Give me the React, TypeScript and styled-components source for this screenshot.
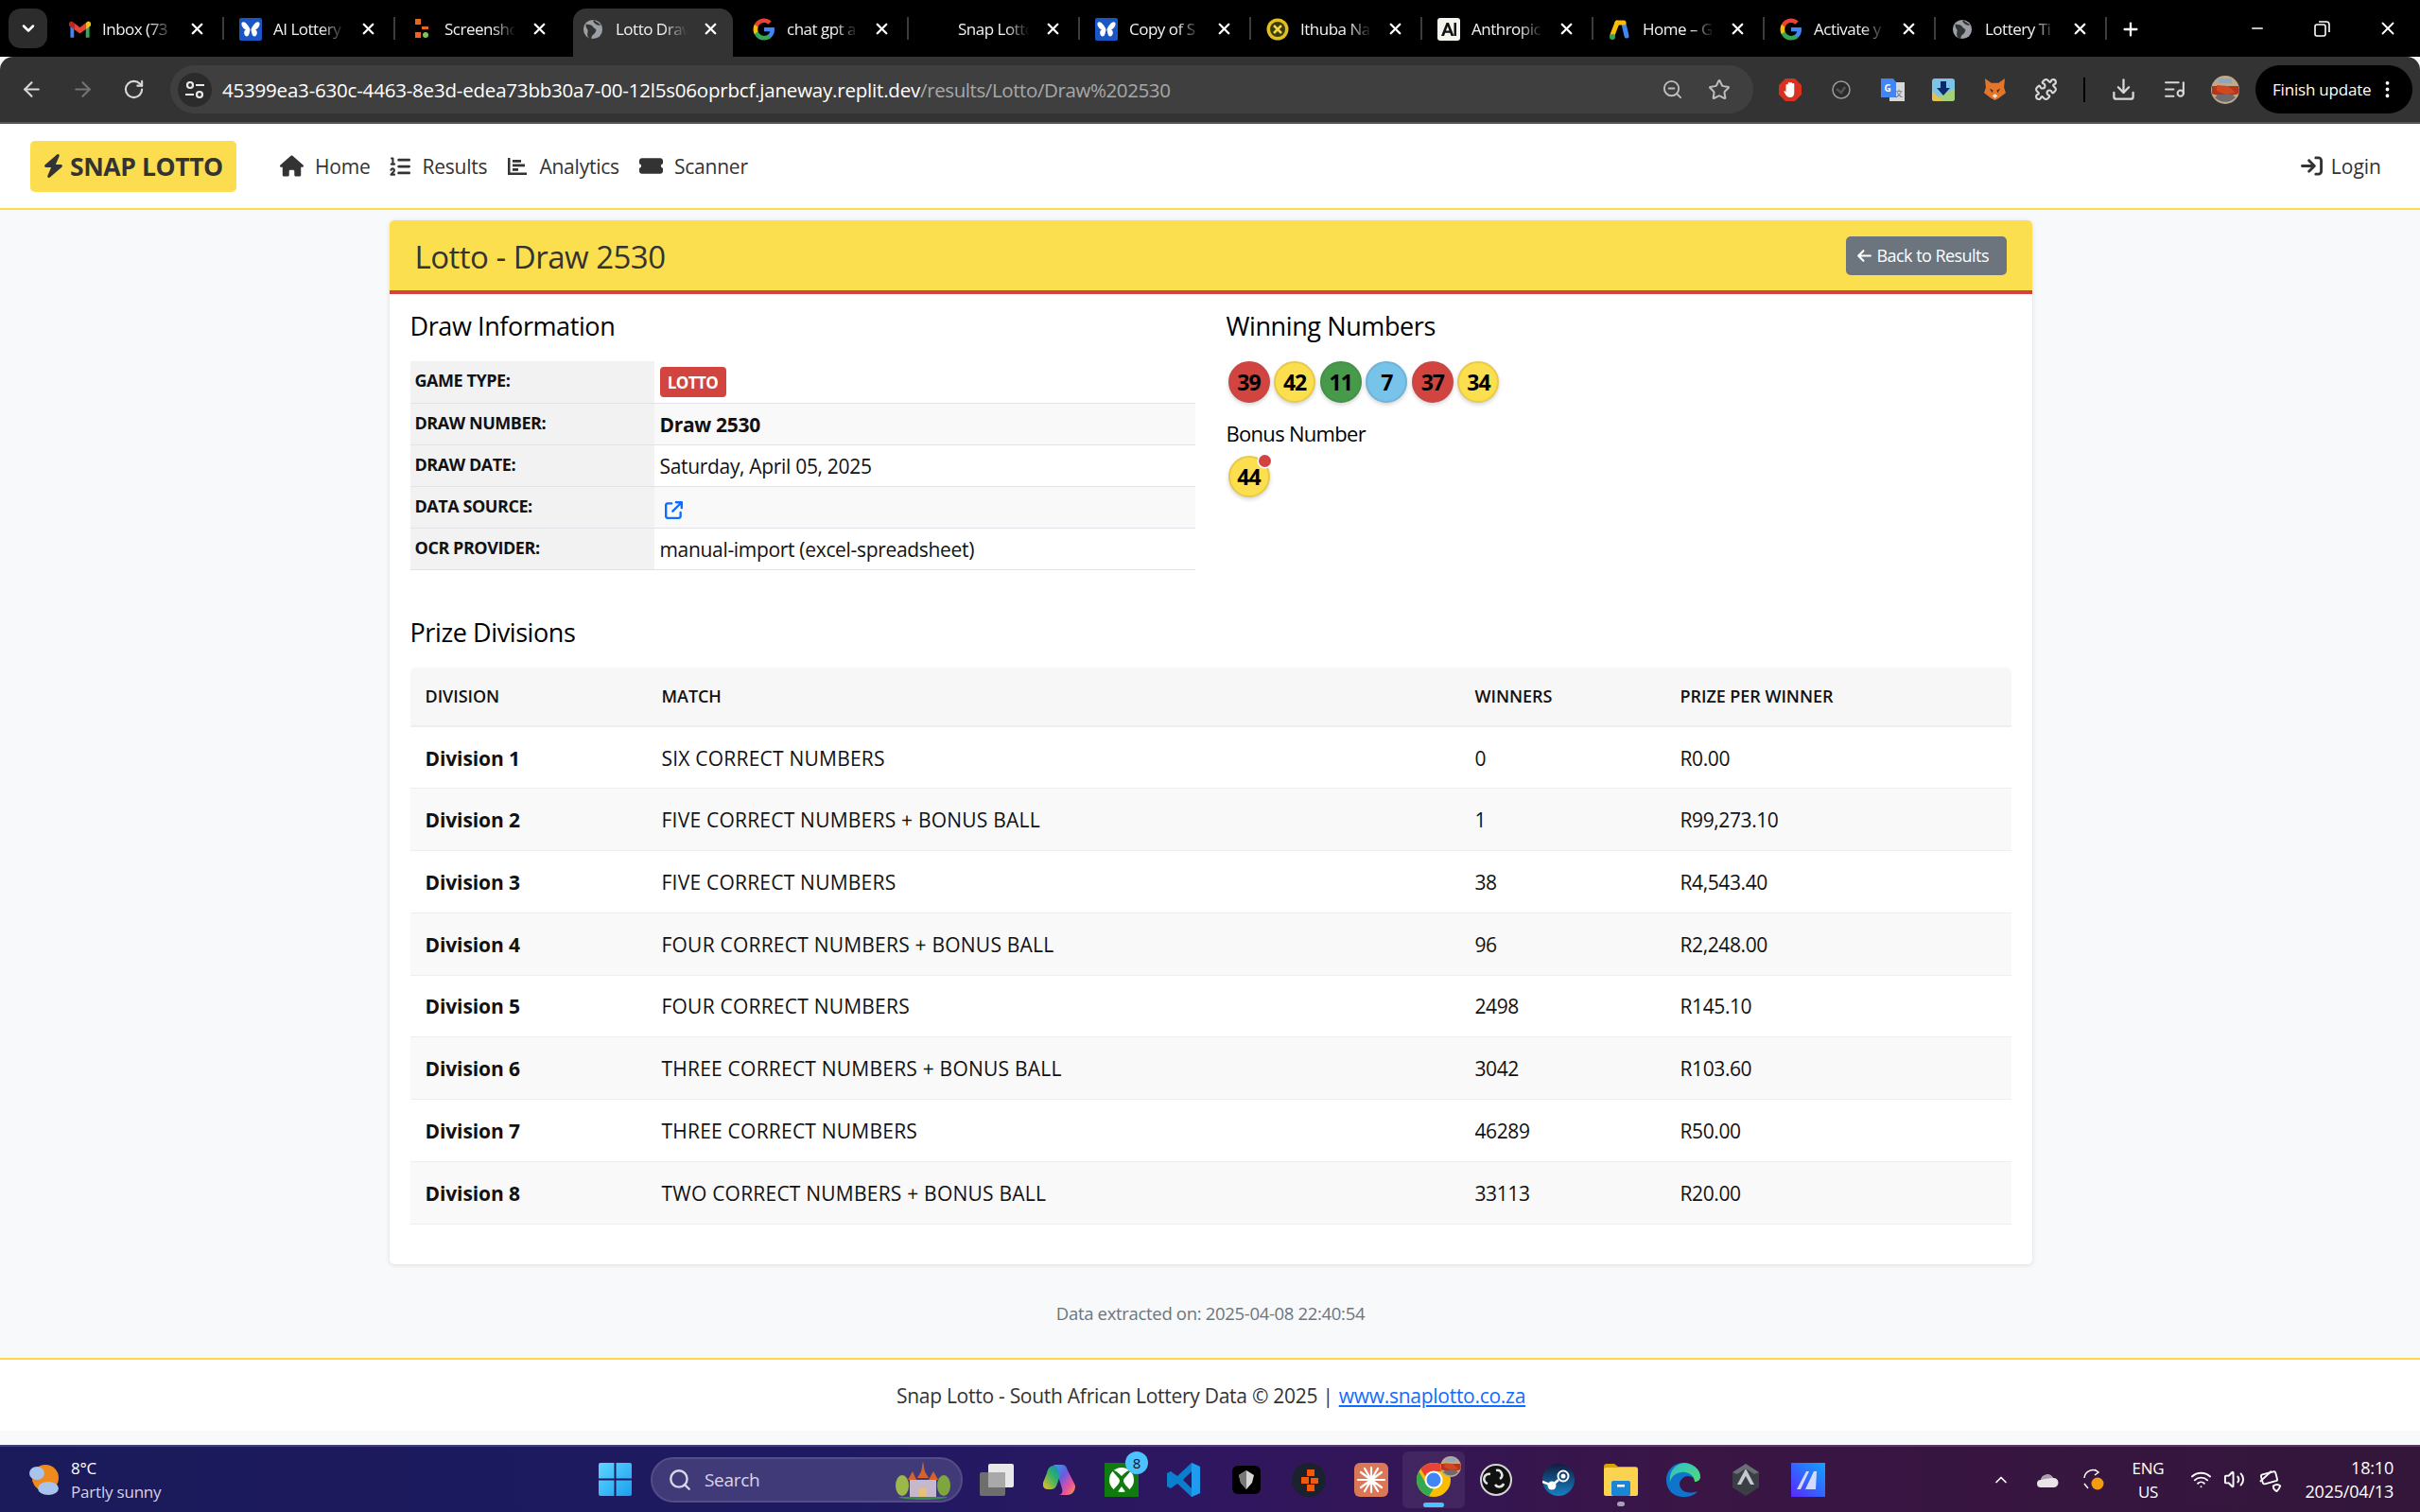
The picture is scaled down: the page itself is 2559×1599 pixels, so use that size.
import React from "react";
import styled, { createGlobalStyle, css } from "styled-components";
import { FaArrowLeft, FaArrowRightToBracket, FaArrowUpRightFromSquare, FaBolt, FaHouse, FaListOl, FaTicketSimple } from "react-icons/fa6";
import { ArrowLeft, ArrowRight, ChevronDown, Download, EllipsisVertical, ListMusic, Minus, Plus, Puzzle, RotateCw, Search, Star, X, ZoomOut, ChevronUp, Wifi, Volume2 } from "lucide-react";

const Global = createGlobalStyle`
  html, body { margin: 0; padding: 0; background: #f8f9fa; }
  body { font-family: "Open Sans", "Noto Sans", sans-serif; color: #333; }
  * { box-sizing: border-box; }
`;

const Screen = styled.div`
  width: 2559px; height: 1599px; display: flex; flex-direction: column; overflow: hidden; background: #f8f9fa;
`;

/* browser chrome */
const TabStrip = styled.div`
  height: 60px; background: #000; display: flex; align-items: flex-end; position: relative; padding-left: 9px; flex: none;
`;
const TabListButton = styled.div`
  width: 41px; height: 42px; margin: 0 6px 9px 0; border-radius: 13px; background: #2c2c2c; color: #fff; display: flex; align-items: center; justify-content: center; flex: none;
`;
const Tab = styled.div<{ $active?: boolean; $sep?: boolean }>`
  width: 181px; height: 51px; flex: none; display: flex; position: relative; align-items: center; color: #fff; padding-bottom: 8px;
  ${p => p.$sep && css`
    &::after { content: ""; position: absolute; right: 0; top: 9px; width: 2px; height: 24px; background: #3c3c3c; }
  `}
  ${p => p.$active && css`
    &::before { content: ""; position: absolute; left: 7px; right: 5px; top: 0; bottom: 0; background: #333; border-radius: 14px 14px 0 0; }
  `}
`;
const FavSlot = styled.div`
  width: 24px; height: 24px; margin-left: 16px; flex: none; position: relative; display: flex; align-items: center; justify-content: center;
`;
const TabTitle = styled.div`
  position: relative; margin-left: 12px; width: 82px; overflow: hidden; white-space: nowrap; font-size: 17px; letter-spacing: -0.5px; color: #f2f2f2;
  -webkit-mask-image: linear-gradient(90deg, #000 62%, transparent 92%); mask-image: linear-gradient(90deg, #000 62%, transparent 92%);
`;
const TabClose = styled.div`
  position: relative; margin-left: 9px; display: flex; color: #fff;
`;
const NewTab = styled.div`
  width: 50px; height: 51px; display: flex; align-items: center; justify-content: center; color: #fff; padding-bottom: 8px; flex: none;
`;
const WindowControls = styled.div`
  margin-left: auto; display: flex; align-self: stretch; color: #fff;
`;
const WindowButton = styled.div`
  width: 69px; display: flex; align-items: center; justify-content: center;
`;

const Toolbar = styled.div`
  height: 69px; background: #333; border-radius: 14px 14px 0 0; display: flex; align-items: center; padding-left: 6px; flex: none;
`;
const ToolbarEdge = styled.div`height: 2px; background: #555; flex: none;`;
const NavButton = styled.div<{ $dim?: boolean }>`
  width: 54px; height: 51px; display: flex; align-items: center; justify-content: center; color: ${p => (p.$dim ? "#757575" : "#d8d8d8")}; flex: none;
`;
const Omnibox = styled.div`
  margin-left: 12px; width: 1674px; height: 51px; border-radius: 26px; background: #3f3f3f; display: flex; align-items: center; padding: 0 24px 0 8px; flex: none;
`;
const SiteChip = styled.div`
  width: 36px; height: 36px; border-radius: 50%; background: #2b2b2b; display: flex; align-items: center; justify-content: center; flex: none; margin-right: 11px;
`;
const UrlHost = styled.span`color: #fff; font-size: 20.5px; letter-spacing: -0.2px; white-space: nowrap;`;
const UrlPath = styled.span`color: #a8a8a8; font-size: 20.5px; letter-spacing: -0.4px; white-space: nowrap;`;
const OmniActions = styled.div`margin-left: auto; display: flex; gap: 26px; color: #bdbdbd; align-items: center;`;
const ExtSlot = styled.div`
  width: 54px; height: 51px; display: flex; align-items: center; justify-content: center; flex: none; color: #d8d8d8;
`;
const ExtGroup = styled.div`display: flex; margin-left: 12px; flex: none;`;
const ToolbarSep = styled.div`width: 2px; height: 26px; background: #000; margin: 0 13px; flex: none;`;
const UpdatePill = styled.div`
  margin-left: 5px; width: 166px; height: 51px; border-radius: 26px; background: #000; color: #fff; display: flex; align-items: center; padding-left: 18px; font-size: 17px; letter-spacing: -0.2px; white-space: nowrap; flex: none;
  svg { margin-left: 6px; }
`;

/* navbar */
const Navbar = styled.nav`
  height: 91px; background: #fff; border-bottom: 2px solid #fcdc4d; display: flex; align-items: center; padding: 0 41px 0 32px; flex: none;
`;
const Brand = styled.div`
  width: 218px; height: 54px; background: #fcdd50; border-radius: 5px; display: flex; align-items: center; padding-left: 12px; gap: 5px;
  font-size: 26.5px; font-weight: 700; color: #333; letter-spacing: -0.4px; white-space: nowrap; flex: none;
`;
const NavLinks = styled.div`display: flex; margin-left: 46px; gap: 21px;`;
const NavLink = styled.a`
  display: flex; align-items: center; gap: 12px; font-size: 21px; color: #333; letter-spacing: -0.22px; white-space: nowrap;
`;
const LoginLink = styled(NavLink)`margin-left: auto; gap: 9px; letter-spacing: 0;`;

/* content */
const Main = styled.main`
  flex: 1; display: flex; flex-direction: column; align-items: center; padding: 11px 0 0 1px;
`;
const Card = styled.section`
  width: 1737px; height: 1104px; background: #fff; border-radius: 5px; box-shadow: 0 1px 5px rgba(0,0,0,.12); flex: none; overflow: hidden;
`;
const CardHeader = styled.header`
  height: 78px; background: #fcdf4f; border-bottom: 4px solid #d1443f; display: flex; align-items: center; justify-content: space-between; padding: 0 27px;
`;
const CardTitle = styled.h1`
  margin: 2px 0 0; font-size: 33px; font-weight: 500; color: #333; letter-spacing: -0.5px;
`;
const BackButton = styled.a`
  width: 170px; height: 41px; background: #6c757d; border-radius: 5px; color: #fff; display: flex; align-items: center; padding-left: 11px; gap: 5px; font-size: 18px; letter-spacing: -0.55px; white-space: nowrap;
`;
const CardBody = styled.div`padding: 18px 22px 0;`;
const InfoRow = styled.div`display: flex; gap: 33px; height: 324px;`;
const InfoColumn = styled.div`width: 830px; flex: none;`;
const SectionTitle = styled.h2`
  margin: 0 0 21px; font-size: 27px; line-height: 32px; font-weight: 500; color: #000; letter-spacing: -0.4px;
`;
const InfoTable = styled.table`
  width: 830px; border-collapse: collapse; table-layout: fixed;
`;
const InfoRowEl = styled.tr<{ $alt?: boolean }>`
  height: 44px; border-bottom: 1.5px solid #e2e2e8;
  td { background: ${p => (p.$alt ? "#f9f9f9" : "#fff")}; }
`;
const InfoHead = styled.th`
  width: 258px; background: #f2f2f2; text-align: left; vertical-align: top; padding: 8px 0 0 5px; font-size: 18px; line-height: 25px; font-weight: 700; text-transform: uppercase; color: #111; letter-spacing: -0.45px;
`;
const InfoValue = styled.td<{ $bold?: boolean }>`
  padding: 2px 0 0 6px; font-size: 21px; color: #111; letter-spacing: -0.32px; font-weight: ${p => (p.$bold ? 700 : 400)}; vertical-align: middle;
`;
const Badge = styled.span`
  display: inline-block; width: 70px; height: 32px; line-height: 33px; text-align: center; background: #d1443f; border-radius: 4px; color: #fff; font-size: 17px; font-weight: 700; letter-spacing: -0.6px; vertical-align: middle; margin-top: -3px;
`;
const SourceLink = styled.a`color: #0d6efd; display: inline-flex; margin-left: 5px; vertical-align: middle;`;
const BallRow = styled.div`display: flex; gap: 4.6px; margin-left: 2px;`;
const ballColors = {
  red: ["#d1443f", "#c84844"],
  yellow: ["#fcdf4f", "#e8c94a"],
  green: ["#479a4a", "#439047"],
  blue: ["#78c3e9", "#6fb3d6"],
};
const Ball = styled.div<{ $c: keyof typeof ballColors }>`
  width: 44px; height: 44px; border-radius: 50%; background: ${p => ballColors[p.$c][0]}; border: 2px solid ${p => ballColors[p.$c][1]};
  box-shadow: 0 2px 4px rgba(0,0,0,.18); display: flex; align-items: center; justify-content: center; font-size: 23px; font-weight: 700; color: #000; letter-spacing: -1px; position: relative;
`;
const BonusDot = styled.span`
  position: absolute; top: -3px; right: -3px; width: 13px; height: 13px; border-radius: 50%; background: #d1443f; box-shadow: 0 0 0 1.5px #fff;
`;
const BonusTitle = styled.h3`
  margin: 19px 0 10px; font-size: 22px; line-height: 27px; font-weight: 500; color: #000; letter-spacing: -0.7px;
`;
const PrizeTitle = styled(SectionTitle)`margin-bottom: 21px;`;
const PrizeTable = styled.table`
  width: 1693px; border-collapse: collapse; table-layout: fixed;
`;
const PrizeHeadRow = styled.tr`
  height: 62px; background: #f7f7f7; border-bottom: 2px solid #eee;
  th:first-child { border-top-left-radius: 6px; }
  th:last-child { border-top-right-radius: 6px; }
`;
const PrizeHead = styled.th<{ $w: number }>`
  width: ${p => p.$w}px; text-align: left; padding: 0 0 2px 16px; font-size: 18px; font-weight: 600; color: #111; text-transform: uppercase; letter-spacing: -0.05px;
`;
const PrizeRow = styled.tr`
  height: 65.75px; border-bottom: 1px solid #eee;
  &:nth-child(even) { background: #f9f9f9; }
`;
const PrizeCell = styled.td<{ $bold?: boolean; $caps?: boolean }>`
  padding: 1px 0 0 16px; font-size: 21px; color: #111; font-weight: ${p => (p.$bold ? 700 : 400)};
  letter-spacing: ${p => (p.$caps ? "0.22px" : p.$bold ? "-0.1px" : "-0.4px")};
`;
const Extracted = styled.div`
  flex: 1; display: flex; align-items: center; justify-content: center; font-size: 18.5px; color: #6c757d; letter-spacing: -0.32px; padding-top: 3px;
`;
const Footer = styled.footer`
  height: 77px; background: #fff; border-top: 2px solid #fcd94a; display: flex; align-items: center; justify-content: center; font-size: 21px; color: #333; letter-spacing: -0.27px; flex: none; margin-bottom: 15px; padding-left: 2px;
  a { color: #0d6efd; text-decoration: underline; margin-left: 6px; }
`;

/* taskbar */
const Taskbar = styled.div`
  height: 71px; flex: none; border-top: 2px solid rgba(255,255,255,.16); background: linear-gradient(90deg, #1b1a5a 0%, #1e1a62 35%, #2f1660 50%, #3a1545 70%, #33163a 100%);
  display: flex; align-items: center; padding: 0 28px 0 30px; color: #fff;
`;
const Weather = styled.div`width: 587px; display: flex; align-items: center; gap: 12px; flex: none;`;
const WeatherText = styled.div`
  font-size: 17px; line-height: 25px; letter-spacing: -0.2px; white-space: nowrap; color: #fff; span { color: #d5d3e6; display: block; }
`;
const TaskGroup = styled.div`display: flex; align-items: center; flex: none;`;
const TaskSlot = styled.div<{ $active?: boolean }>`
  width: 66px; height: 60px; display: flex; align-items: center; justify-content: center; position: relative; border-radius: 6px; flex: none;
  ${p => p.$active && css`
    background: rgba(255,255,255,.07);
    &::after { content: ""; position: absolute; bottom: 1px; left: 22px; width: 22px; height: 5px; border-radius: 3px; background: #4cc2ff; }
  `}
`;
const RunDot = styled.span`position: absolute; bottom: 2px; left: 29px; width: 8px; height: 5px; border-radius: 3px; background: #a99fb8;`;
const SearchBox = styled.div`
  width: 330px; height: 48px; margin: 0 3px 0 5px; border-radius: 24px; background: #413a78; border: 2px solid #544c86; display: flex; align-items: center; padding-left: 16px; gap: 13px; font-size: 19px; color: #d8d6ea; letter-spacing: -0.3px; position: relative; flex: none;
`;
const SearchCastle = styled.div`position: absolute; right: 10px; top: 2px; display: flex;`;
const XboxBadge = styled.span`
  position: absolute; top: 0; right: 5px; width: 24px; height: 24px; border-radius: 50%; background: #4cc2ff; color: #111; font-size: 15px; display: flex; align-items: center; justify-content: center;
`;
const ChromeBadge = styled.span`position: absolute; top: 5px; right: 4px; display: flex;`;
const Tray = styled.div`margin-left: auto; display: flex; align-items: center; flex: none; color: #fff;`;
const TrayIcon = styled.div<{ $w: number }>`width: ${p => p.$w}px; display: flex; align-items: center; justify-content: center; flex: none;`;
const Lang = styled.div`width: 50px; font-size: 17px; line-height: 25px; text-align: center; letter-spacing: -0.3px; margin: 0 18px 0 8px;`;
const Clock = styled.div`margin-left: 19px; font-size: 18px; line-height: 25px; text-align: right; letter-spacing: -0.2px; white-space: nowrap;`;

/* drawings */
const GlobeFav = () => (
  <svg width="22" height="22" viewBox="0 0 24 24"><circle cx="12" cy="12" r="11" fill="#9aa0a6" /><path d="M4 6c4 1 6 0 8 3s5 2 3 6-4 2-5 8c-4-1-5-4-4-8S3 11 4 6zM13 1c2 2 5 3 8 6-3 1-5 0-7-2s-2-3-1-4z" fill="#333" /></svg>
);
const ButterflyFav = () => (
  <svg width="24" height="24" viewBox="0 0 24 24"><rect width="24" height="24" rx="2" fill="#1a56c4" /><path d="M11.500 12C9 7 6 3.500 3.500 4.500S3 11 7 12.500C4 13.500 5 19 7.500 19.500S11 16 11.500 12zM12.500 12C15 7 18 3.500 20.500 4.500S21 11 17 12.500c3 1 2 6.500-.5 7S13 16 12.500 12z" fill="#fff" /></svg>
);
const GoogleFav = () => (
  <svg width="24" height="24" viewBox="0 0 24 24">
    <path d="M23 12.300c0-.8-.1-1.600-.2-2.300H12v4.300h6.200c-.3 1.400-1.100 2.600-2.300 3.400v2.900h3.700c2.200-2 3.400-5 3.400-8.300z" fill="#4285f4" />
    <path d="M12 23.500c3.100 0 5.700-1 7.600-2.800l-3.700-2.900c-1 .7-2.300 1.100-3.900 1.100-3 0-5.500-2-6.400-4.700H1.800v3A11.500 11.500 0 0 0 12 23.500z" fill="#34a853" />
    <path d="M5.600 14.200a6.900 6.900 0 0 1 0-4.400v-3H1.800a11.500 11.500 0 0 0 0 10.400l3.800-3z" fill="#fbbc05" />
    <path d="M12 5.100c1.700 0 3.200.6 4.400 1.700l3.300-3.300A11.500 11.500 0 0 0 1.800 6.800l3.800 3C6.500 7.100 9 5.100 12 5.100z" fill="#ea4335" />
  </svg>
);
const favicons: Record<string, React.ReactNode> = {
  gmail: (
    <svg width="23" height="18" viewBox="0 0 24 18"><path d="M1.500 18V5l4 3v10z" fill="#4285f4" /><path d="M18.500 18V8l4-3v13z" fill="#34a853" /><path d="M18.500 2v7L12 13.800 5.500 9V2L12 7z" fill="#ea4335" /><path d="M0 2.500C0 .5 2.500-.7 4 .6L5.500 2v7L0 5z" fill="#c5221f" /><path d="M24 2.500C24 .5 21.500-.7 20 .6L18.500 2v7L24 5z" fill="#fbbc04" /></svg>
  ),
  butterfly: <ButterflyFav />,
  blocks: (
    <svg width="16" height="24" viewBox="0 0 16 24"><rect x="1" y="1" width="6" height="6" fill="#e8661f" /><rect x="8" y="9" width="7" height="3" fill="#e8661f" /><rect x="1" y="15" width="6" height="6" fill="#e8661f" /><circle cx="12" cy="18" r="3" fill="#7ac74f" /></svg>
  ),
  globe: <GlobeFav />,
  google: <GoogleFav />,
  none: null,
  ithuba: (
    <svg width="24" height="24" viewBox="0 0 24 24"><circle cx="12" cy="12" r="11.500" fill="#e0c020" /><circle cx="12" cy="12" r="8" fill="#3a3a10" /><path d="M8 8l8 8M16 8l-8 8" stroke="#f0d840" strokeWidth="2.500" /></svg>
  ),
  anthropic: (
    <svg width="24" height="24" viewBox="0 0 24 24"><rect width="24" height="24" rx="3" fill="#f5f5f0" /><path d="M4 19 9.500 5h2.500l5.500 14h-3l-1.200-3.300H8.200L7 19zm5-5.500h3.500L10.800 8.700z" fill="#111" /><rect x="17.500" y="5" width="2.500" height="14" fill="#111" /></svg>
  ),
  ads: (
    <svg width="24" height="24" viewBox="0 0 24 24"><path d="M9 5 4 18" stroke="#fbbc04" strokeWidth="5" strokeLinecap="round" /><path d="M16 6 19 19" stroke="#4285f4" strokeWidth="5" strokeLinecap="round" /><path d="M9 5h7" stroke="#fbbc04" strokeWidth="5" strokeLinecap="round" /><circle cx="4" cy="20" r="3" fill="#34a853" /></svg>
  ),
};
const tabs = [
  ["gmail", "Inbox (73"], ["butterfly", "AI Lottery"], ["blocks", "Screensho"], ["globe", "Lotto Draw"], ["google", "chat gpt a"],
  ["none", "Snap Lotto"], ["butterfly", "Copy of S"], ["ithuba", "Ithuba Na"], ["anthropic", "Anthropic"], ["ads", "Home – G"],
  ["google", "Activate y"], ["globe", "Lottery Ti"],
] as const;

const TuneIcon = () => (
  <svg width="24" height="24" viewBox="0 0 24 24" fill="none" stroke="#e8e8e8" strokeWidth="2.200"><circle cx="7" cy="7" r="3" /><path d="M13 7h9M2 17h9" /><circle cx="17" cy="17" r="3" /></svg>
);
const ExtIcons = [
  <svg key="a" width="24" height="24" viewBox="0 0 24 24"><path d="M7 0h10l7 7v10l-7 7H7l-7-7V7z" fill="#d9301f" /><path d="M7.500 16V7a1.100 1.100 0 0 1 2.200 0V5a1.100 1.100 0 0 1 2.200 0v0a1.100 1.100 0 0 1 2.200 0v1a1.100 1.100 0 0 1 2.200 0v9c0 3-1.500 5-4.500 5-2.500 0-3.500-1.500-5-3.500l-1.500-3c1.500-1 2.500.5 2.200 2.500z" fill="#fff" /></svg>,
  <svg key="b" width="20" height="20" viewBox="0 0 20 20"><circle cx="10" cy="10" r="9" fill="#2b2b2b" stroke="#9a9a9a" strokeWidth="1.500" /><path d="M5 9l5 4 4-6" stroke="#555" strokeWidth="2.500" fill="none" /></svg>,
  <svg key="c" width="25" height="24" viewBox="0 0 25 24"><rect x="9" y="4" width="16" height="20" fill="#d8d8d8" /><path d="M0 0h13l3 4v16H0z" fill="#4285f4" /><text x="7" y="14" fontSize="10" fontFamily="Open Sans" fontWeight="700" fill="#fff" textAnchor="middle">G</text><text x="19" y="19" fontSize="8" fontFamily="Noto Sans CJK SC" fill="#666" textAnchor="middle">文</text></svg>,
  <svg key="d" width="24" height="24" viewBox="0 0 24 24"><rect width="24" height="24" rx="3" fill="#7cc3e8" /><path d="M0 22 24 11v10a3 3 0 0 1-3 3H3a3 3 0 0 1-3-3z" fill="#a6cf7a" /><path d="M0 13l11 11H3a3 3 0 0 1-3-3z" fill="#e7c04e" /><path d="M9 3h6v7h4l-7 8-7-8h4z" fill="#0b2a6b" /></svg>,
  <svg key="e" width="23" height="23" viewBox="0 0 24 24"><path d="M1 0l7 5h8l7-5-1 10 2 6-8 6-4 2-4-2-8-6 2-6z" fill="#e2762a" /><path d="M6 11l4 2-1 3zM18 11l-4 2 1 3z" fill="#5a2a10" /><path d="M9 19l3-2 3 2-3 3z" fill="#f3e0d0" /></svg>,
  <Puzzle key="f" size={25} strokeWidth={2} color="#d8d8d8" />,
];

const Avatar = ({ size = 30 }: { size?: number }) => (
  <svg width={size} height={size} viewBox="0 0 30 30">
    <circle cx="15" cy="15" r="15" fill="#bfa98a" />
    <path d="M1 11h28c1 4 1 6 0 8-6 3-23 3-28 0z" fill="#b5361f" />
    <path d="M6 10l12 1 8 7-10 2-10-4z" fill="#cf4a23" />
    <path d="M4 23a15 15 0 0 0 22 0l-4-3H8z" fill="#6d6a70" />
    <path d="M8 3h14v5H8z" fill="#8aa8c8" />
  </svg>
);

const WinLogo = () => (
  <svg width="35" height="35" viewBox="0 0 35 35"><defs><linearGradient id="wl" x1="0" y1="0" x2="1" y2="1"><stop offset="0" stopColor="#60d6ff" /><stop offset="1" stopColor="#1a9ff0" /></linearGradient></defs><path d="M0 2a2 2 0 0 1 2-2h14.500v16.500H0zM18.500 0H33a2 2 0 0 1 2 2v14.500H18.500zM0 18.500h16.500V35H2a2 2 0 0 1-2-2zM18.500 18.500H35V33a2 2 0 0 1-2 2H18.500z" fill="url(#wl)" /></svg>
);
const Castle = () => (
  <svg width="60" height="42" viewBox="0 0 60 42"><ellipse cx="8" cy="26" rx="7" ry="11" fill="#9db84a" /><ellipse cx="52" cy="26" rx="7" ry="11" fill="#7fa53f" /><path d="M30 0l2 12h-4z" fill="#b8654a" /><rect x="16" y="20" width="28" height="18" fill="#c5b8cc" /><path d="M14 20l5-9 4 9zM36 20l5-9 5 9zM24 18l6-10 6 10z" fill="#d9622c" /><rect x="26" y="28" width="8" height="10" fill="#e6c07a" /><path d="M4 38h52c-2 4-50 4-52 0z" fill="#3d8a4c" /></svg>
);
const TaskIcons: Record<string, React.ReactNode> = {
  view: (
    <svg width="36" height="34" viewBox="0 0 36 34"><rect x="0" y="9" width="27" height="25" rx="2" fill="#6e6e6e" /><rect x="9" y="0" width="27" height="25" rx="2" fill="#e8e8e8" /><rect x="9" y="9" width="18" height="16" fill="#a9a9a9" /></svg>
  ),
  copilot: (
    <svg width="34" height="32" viewBox="0 0 34 32"><defs><linearGradient id="co" x1="0" y1="0" x2="1" y2="1"><stop offset="0" stopColor="#2aa7e8" /><stop offset=".4" stopColor="#6a5ae0" /><stop offset=".7" stopColor="#e84fa0" /><stop offset="1" stopColor="#f7a030" /></linearGradient><linearGradient id="co2" x1="0" y1="1" x2="1" y2="0"><stop offset="0" stopColor="#f0c020" /><stop offset=".6" stopColor="#2ab06a" /><stop offset="1" stopColor="#1a80e0" /></linearGradient></defs><path d="M11 0h9c4 0 5 3 6 6l8 16c0 6-3 10-9 10h-9c4 0 5-3 4-7L14 6c-1-4-3-6-3-6z" fill="url(#co)" /><path d="M12 1C7 1 5 4 4 9L0 19c-1 5 2 7 5 7h4c3 0 5-3 6-6l3-9c-2-5-3-10-6-10z" fill="url(#co2)" /></svg>
  ),
  xbox: (
    <svg width="36" height="36" viewBox="0 0 36 36"><rect width="36" height="36" fill="#107c10" /><circle cx="18" cy="18" r="13" fill="#fff" /><path d="M18 14c-5-5-8-7-10-6 4 6 8 8 8 11 0 3-5 7-8 11l5 2 5-7 5 7 5-2c-3-4-8-8-8-11 0-3 4-5 8-11-2-1-5 1-10 6z" fill="#107c10" /></svg>
  ),
  vscode: (
    <svg width="38" height="38" viewBox="0 0 38 38"><path d="M27 1l9 4v28l-9 4-15-14-7 5-4-2V12l4-2 7 5zM27 10l-9 9 9 9z" fill="#0a7fce" /><path d="M27 1l9 4v28l-9 4z" fill="#1f9cf0" /></svg>
  ),
  cube: (
    <svg width="30" height="30" viewBox="0 0 30 30"><rect width="30" height="30" rx="6" fill="#000" /><path d="M15 5l8 5-2 8-6 7-6-7-2-8z" fill="#d5d5d5" /><path d="M15 5v20l-6-7-2-8z" fill="#777" /></svg>
  ),
  gems: (
    <svg width="36" height="36" viewBox="0 0 36 36"><circle cx="18" cy="18" r="18" fill="#1a222e" /><rect x="10" y="15" width="8" height="7" fill="#f2590c" /><rect x="16" y="7" width="8" height="7" fill="#f2590c" /><rect x="20" y="16" width="8" height="6" fill="#f2590c" /><rect x="16" y="23" width="8" height="7" fill="#f2590c" /></svg>
  ),
  claude: (
    <svg width="36" height="36" viewBox="0 0 36 36"><rect width="36" height="36" rx="6" fill="#d97757" /><g stroke="#fff" strokeWidth="2.200" strokeLinecap="round"><path d="M18 5v26M7 10l22 16M29 10L7 26M4 18h28M11 6l14 24M25 6L11 30" /></g></svg>
  ),
  chrome: (
    <svg width="36" height="36" viewBox="0 0 36 36"><circle cx="18" cy="18" r="18" fill="#fbbc04" /><path d="M18 0a18 18 0 0 1 15.600 9H18a9 9 0 0 0-8.500 6L4.200 6.500A18 18 0 0 1 18 0z" fill="#ea4335" /><path d="M2.400 9l8 13.800A9 9 0 0 0 18 27l-5 8.300A18 18 0 0 1 2.400 9z" fill="#34a853" /><circle cx="18" cy="18" r="9.500" fill="#fff" /><circle cx="18" cy="18" r="7.500" fill="#4285f4" /></svg>
  ),
  obs: (
    <svg width="34" height="34" viewBox="0 0 34 34"><circle cx="17" cy="17" r="16" fill="#111" stroke="#d5d5d5" strokeWidth="2" /><g fill="none" stroke="#e5e5e5" strokeWidth="2.500"><path d="M17 7a5 5 0 0 1 4 9M25 21a5 5 0 0 1-9 1M8 21a5 5 0 0 1 3-10" /></g></svg>
  ),
  steam: (
    <svg width="34" height="34" viewBox="0 0 34 34"><defs><linearGradient id="st" x1="0" y1="0" x2="0" y2="1"><stop offset="0" stopColor="#111d3f" /><stop offset="1" stopColor="#1681c4" /></linearGradient></defs><circle cx="17" cy="17" r="17" fill="url(#st)" /><circle cx="22" cy="13" r="5.500" fill="none" stroke="#fff" strokeWidth="2" /><circle cx="22" cy="13" r="2.500" fill="#fff" /><circle cx="10" cy="23" r="4.500" fill="#fff" /><path d="M0 19l10 4 7-6" stroke="#fff" strokeWidth="2.500" fill="none" /></svg>
  ),
  folder: (
    <svg width="36" height="34" viewBox="0 0 36 34"><path d="M0 3a3 3 0 0 1 3-3h8l4 3h18a3 3 0 0 1 3 3v3H0z" fill="#d8a200" /><rect y="4" width="36" height="30" rx="2" fill="#fcd34f" /><rect x="8" y="18" width="20" height="16" rx="2" fill="#1a86d8" /><rect x="14" y="22" width="8" height="2.500" fill="#fff" /></svg>
  ),
  edge: (
    <svg width="36" height="36" viewBox="0 0 36 36"><defs><linearGradient id="ed" x1="0" y1="0" x2="1" y2="1"><stop offset="0" stopColor="#2fbfd0" /><stop offset="1" stopColor="#50dc70" /></linearGradient></defs><path d="M18 0C8 0 0 8 0 18c0 11 8 18 18 18 7 0 12-2 15-6-7 3-19 2-19-8 0-3 4-8 9-8 5 0 7 3 7 5 3 0 6-2 6-5C36 7 28 0 18 0z" fill="#0f75cc" /><path d="M18 0c10 0 18 7 18 15 0 3-3 5-6 5 0-7-8-11-14-10C9 11 5 15 4 20 3 10 8 2 18 0z" fill="url(#ed)" /></svg>
  ),
  crystal: (
    <svg width="32" height="34" viewBox="0 0 32 34"><path d="M16 0l14 9v16l-14 9-14-9V9z" fill="#3b3e44" /><path d="M16 5l9 17H7z" fill="#c5c9cf" /><path d="M16 13l5 9H11z" fill="#3b3e44" /><path d="M16 0l14 9-5 2-9-6-9 6-5-2z" fill="#6a6e75" /></svg>
  ),
  agent: (
    <svg width="36" height="36" viewBox="0 0 36 36"><defs><linearGradient id="ag" x1="1" y1="0" x2="0" y2="1"><stop offset="0" stopColor="#0da5ff" /><stop offset="1" stopColor="#5a27ff" /></linearGradient></defs><rect width="36" height="36" fill="url(#ag)" /><path d="M6 28 16 9h3L10 28zM15 28l9-19h3l-1 19z" fill="#eef" opacity=".85" /></svg>
  ),
};
const taskKeys = ["view", "copilot", "xbox", "vscode", "cube", "gems", "claude", "chrome", "obs", "steam", "folder", "edge", "crystal", "agent"];

const AnalyticsIcon = () => (
  <svg width="22" height="22" viewBox="0 0 22 22" fill="currentColor"><path d="M1 2h2.500v15.500H21V20H1z" /><rect x="6" y="4" width="9" height="2.800" /><rect x="6" y="8.500" width="13" height="2.800" /><rect x="6" y="13" width="6" height="2.800" /></svg>
);

const balls: [string, keyof typeof ballColors][] = [["39", "red"], ["42", "yellow"], ["11", "green"], ["7", "blue"], ["37", "red"], ["34", "yellow"]];
const prizes = [
  ["Division 1", "SIX CORRECT NUMBERS", "0", "R0.00"],
  ["Division 2", "FIVE CORRECT NUMBERS + BONUS BALL", "1", "R99,273.10"],
  ["Division 3", "FIVE CORRECT NUMBERS", "38", "R4,543.40"],
  ["Division 4", "FOUR CORRECT NUMBERS + BONUS BALL", "96", "R2,248.00"],
  ["Division 5", "FOUR CORRECT NUMBERS", "2498", "R145.10"],
  ["Division 6", "THREE CORRECT NUMBERS + BONUS BALL", "3042", "R103.60"],
  ["Division 7", "THREE CORRECT NUMBERS", "46289", "R50.00"],
  ["Division 8", "TWO CORRECT NUMBERS + BONUS BALL", "33113", "R20.00"],
];

export default function App() {
  return (
    <Screen>
      <Global />
      <TabStrip>
        <TabListButton><ChevronDown size={20} strokeWidth={3} /></TabListButton>
        {tabs.map(([icon, title], i) => (
          <Tab key={i} $active={i === 3} $sep={i !== 2 && i !== 3}>
            <FavSlot>{favicons[icon]}</FavSlot>
            <TabTitle>{title}</TabTitle>
            <TabClose><X size={19} strokeWidth={3} /></TabClose>
          </Tab>
        ))}
        <NewTab><Plus size={22} strokeWidth={2.5} /></NewTab>
        <WindowControls>
          <WindowButton><Minus size={18} /></WindowButton>
          <WindowButton>
            <svg width="17" height="17" viewBox="0 0 17 17" fill="none" stroke="#fff" strokeWidth="1.600"><rect x="1" y="4" width="11" height="12" rx="2" /><path d="M5 1h8a3 3 0 0 1 3 3v8" /></svg>
          </WindowButton>
          <WindowButton><X size={22} /></WindowButton>
        </WindowControls>
      </TabStrip>
      <Toolbar>
        <NavButton><ArrowLeft size={25} strokeWidth={2} /></NavButton>
        <NavButton $dim><ArrowRight size={25} strokeWidth={2} /></NavButton>
        <NavButton><RotateCw size={23} strokeWidth={2.2} /></NavButton>
        <Omnibox>
          <SiteChip><TuneIcon /></SiteChip>
          <UrlHost>45399ea3-630c-4463-8e3d-edea73bb30a7-00-12l5s06oprbcf.janeway.replit.dev</UrlHost>
          <UrlPath>/results/Lotto/Draw%202530</UrlPath>
          <OmniActions>
            <ZoomOut size={23} strokeWidth={2} />
            <Star size={24} strokeWidth={2} />
          </OmniActions>
        </Omnibox>
        <ExtGroup>{ExtIcons.map((e, i) => <ExtSlot key={i}>{e}</ExtSlot>)}</ExtGroup>
        <ToolbarSep />
        <ExtSlot><Download size={27} /></ExtSlot>
        <ExtSlot><ListMusic size={25} /></ExtSlot>
        <ExtSlot><Avatar /></ExtSlot>
        <UpdatePill>Finish update<EllipsisVertical size={23} /></UpdatePill>
      </Toolbar>
      <ToolbarEdge />
      <Navbar>
        <Brand><FaBolt size={25} />SNAP LOTTO</Brand>
        <NavLinks>
          <NavLink><FaHouse size={25} />Home</NavLink>
          <NavLink><FaListOl size={22} />Results</NavLink>
          <NavLink><AnalyticsIcon />Analytics</NavLink>
          <NavLink><FaTicketSimple size={25} />Scanner</NavLink>
        </NavLinks>
        <LoginLink><FaArrowRightToBracket size={23} />Login</LoginLink>
      </Navbar>
      <Main>
        <Card>
          <CardHeader>
            <CardTitle>Lotto - Draw 2530</CardTitle>
            <BackButton><FaArrowLeft size={17} />Back to Results</BackButton>
          </CardHeader>
          <CardBody>
            <InfoRow>
              <InfoColumn>
                <SectionTitle>Draw Information</SectionTitle>
                <InfoTable>
                  <tbody>
                    <InfoRowEl><InfoHead>Game Type:</InfoHead><InfoValue><Badge>LOTTO</Badge></InfoValue></InfoRowEl>
                    <InfoRowEl $alt><InfoHead>Draw Number:</InfoHead><InfoValue $bold>Draw 2530</InfoValue></InfoRowEl>
                    <InfoRowEl><InfoHead>Draw Date:</InfoHead><InfoValue>Saturday, April 05, 2025</InfoValue></InfoRowEl>
                    <InfoRowEl $alt><InfoHead>Data Source:</InfoHead><InfoValue><SourceLink><FaArrowUpRightFromSquare size={19} /></SourceLink></InfoValue></InfoRowEl>
                    <InfoRowEl><InfoHead>OCR Provider:</InfoHead><InfoValue>manual-import (excel-spreadsheet)</InfoValue></InfoRowEl>
                  </tbody>
                </InfoTable>
              </InfoColumn>
              <div>
                <SectionTitle>Winning Numbers</SectionTitle>
                <BallRow>{balls.map(([n, c]) => <Ball key={n} $c={c}>{n}</Ball>)}</BallRow>
                <BonusTitle>Bonus Number</BonusTitle>
                <BallRow><Ball $c="yellow">44<BonusDot /></Ball></BallRow>
              </div>
            </InfoRow>
            <PrizeTitle>Prize Divisions</PrizeTitle>
            <PrizeTable>
              <thead>
                <PrizeHeadRow>
                  <PrizeHead $w={250}>Division</PrizeHead>
                  <PrizeHead $w={860}>Match</PrizeHead>
                  <PrizeHead $w={217}>Winners</PrizeHead>
                  <PrizeHead $w={366}>Prize Per Winner</PrizeHead>
                </PrizeHeadRow>
              </thead>
              <tbody>
                {prizes.map(p => (
                  <PrizeRow key={p[0]}>
                    <PrizeCell $bold>{p[0]}</PrizeCell>
                    <PrizeCell $caps>{p[1]}</PrizeCell>
                    <PrizeCell>{p[2]}</PrizeCell>
                    <PrizeCell>{p[3]}</PrizeCell>
                  </PrizeRow>
                ))}
              </tbody>
            </PrizeTable>
          </CardBody>
        </Card>
        <Extracted>Data extracted on: 2025-04-08 22:40:54</Extracted>
      </Main>
      <Footer>Snap Lotto - South African Lottery Data © 2025 | <a>www.snaplotto.co.za</a></Footer>
      <Taskbar>
        <Weather>
          <svg width="33" height="33" viewBox="0 0 33 33"><circle cx="18" cy="15" r="14" fill="#f08a1d" /><ellipse cx="9" cy="10" rx="8" ry="7" fill="#a8c4ec" /><ellipse cx="21" cy="26" rx="11" ry="7" fill="#a8c4ec" /></svg>
          <WeatherText>8°C<span>Partly sunny</span></WeatherText>
        </Weather>
        <TaskGroup>
          <TaskSlot><WinLogo /></TaskSlot>
          <SearchBox>
            <Search size={26} strokeWidth={2.2} />
            Search
            <SearchCastle><Castle /></SearchCastle>
          </SearchBox>
          {taskKeys.map(k => (
            <TaskSlot key={k} $active={k === "chrome"}>
              {TaskIcons[k]}
              {k === "xbox" && <XboxBadge>8</XboxBadge>}
              {k === "chrome" && <ChromeBadge><Avatar size={22} /></ChromeBadge>}
              {k === "folder" && <RunDot />}
            </TaskSlot>
          ))}
        </TaskGroup>
        <Tray>
          <TrayIcon $w={48}><ChevronUp size={20} /></TrayIcon>
          <TrayIcon $w={50}>
            <svg width="24" height="16" viewBox="0 0 24 16"><path d="M5 16a4 4 0 0 1 0-8 7 7 0 0 1 13-2 5 5 0 0 1 1 10z" fill="#e8e4ea" /><path d="M5 8a7 7 0 0 1 13-2c-4 0-9 1-13 2z" fill="#a89cad" /></svg>
          </TrayIcon>
          <TrayIcon $w={48}>
            <svg width="24" height="24" viewBox="0 0 24 24" fill="none" stroke="#fff" strokeWidth="1.500"><path d="M2 10a9 9 0 0 1 15-6M13 1l4 3-4 3M2 16l4 5" /><circle cx="16" cy="16" r="6.500" fill="#f39c12" stroke="none" /></svg>
          </TrayIcon>
          <Lang>ENG<br />US</Lang>
          <TrayIcon $w={26}><Wifi size={23} /></TrayIcon>
          <TrayIcon $w={44}><Volume2 size={23} /></TrayIcon>
          <TrayIcon $w={34}>
            <svg width="26" height="26" viewBox="0 0 28 28" fill="none" stroke="#fff" strokeWidth="2"><rect x="4" y="6" width="17" height="11" rx="2" transform="rotate(-15 13 12)" /><path d="M2 16L15 4M17 21c3-2 6-2 8 0-1 3-3 5-4 6-2-1-4-3-4-6z" /></svg>
          </TrayIcon>
          <Clock>18:10<br />2025/04/13</Clock>
        </Tray>
      </Taskbar>
    </Screen>
  );
}
